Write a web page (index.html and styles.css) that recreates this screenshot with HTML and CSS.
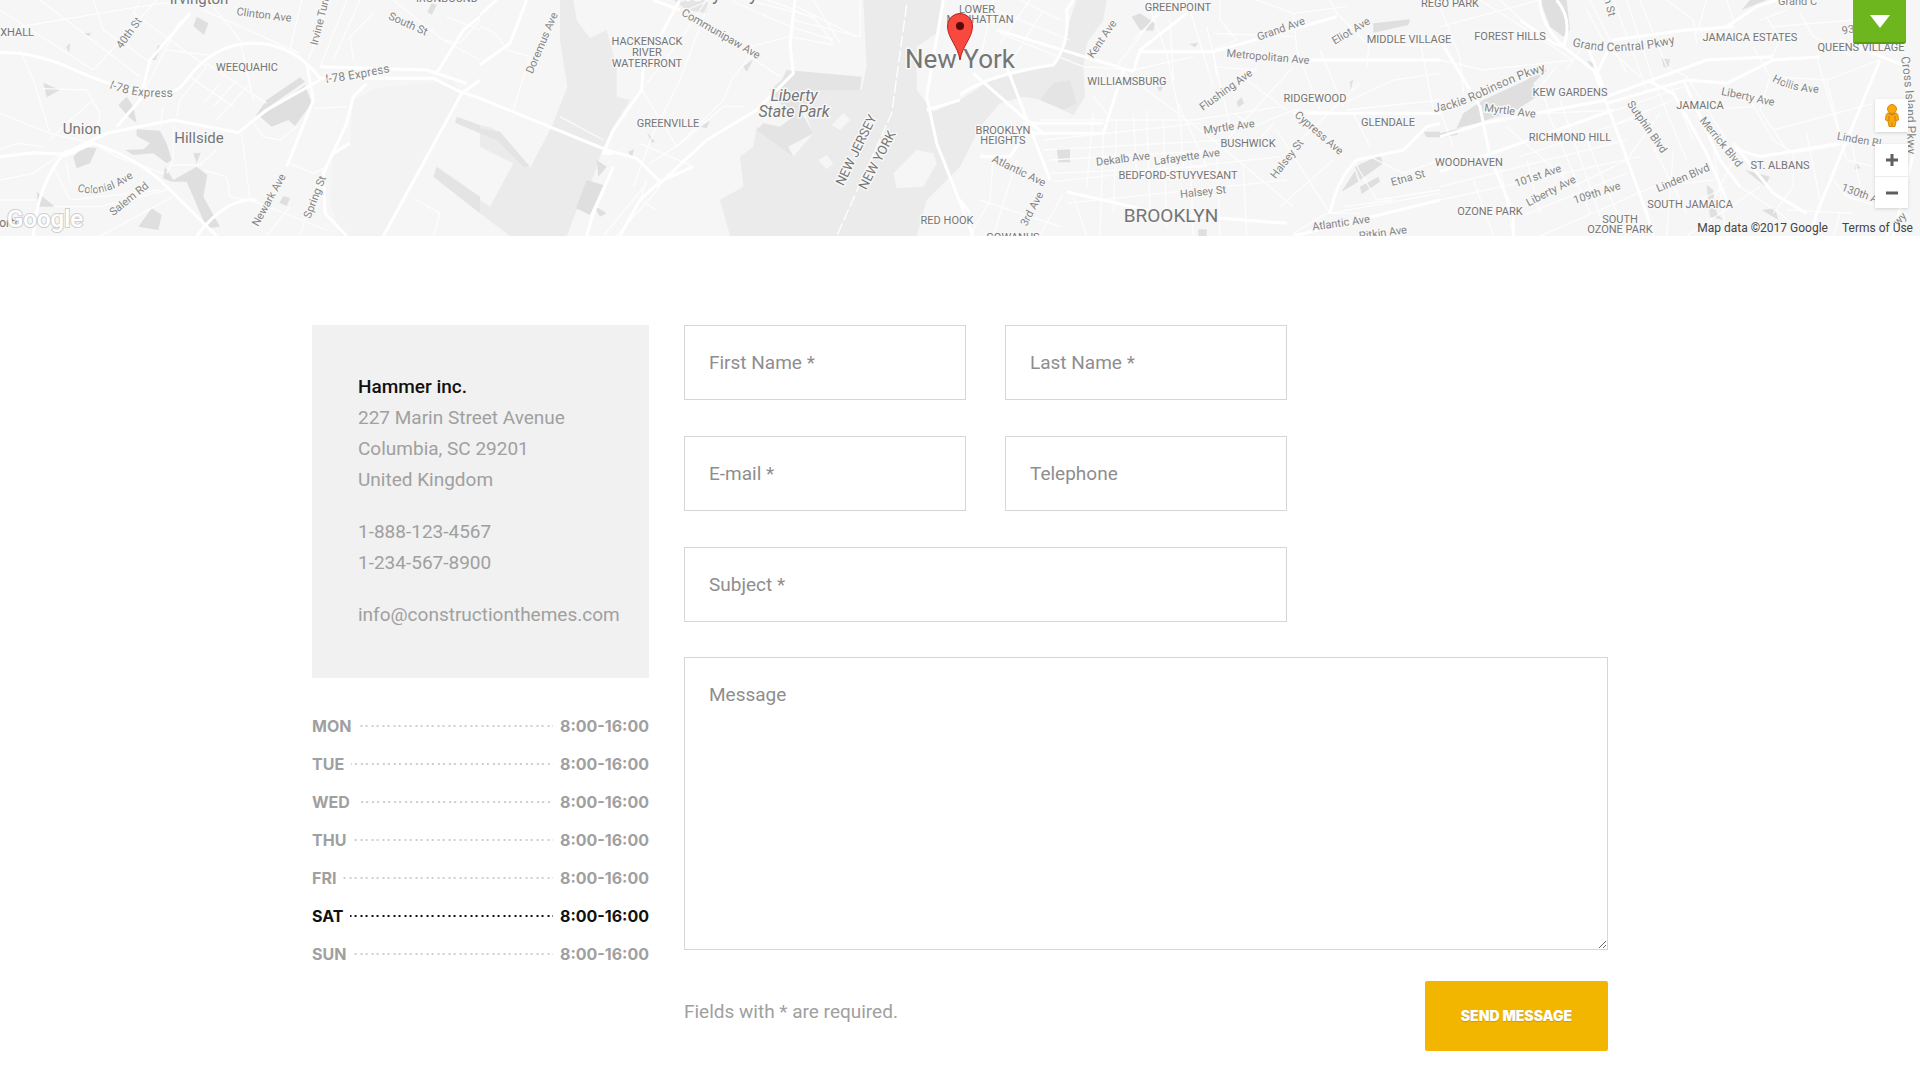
FILE: index.html
```html
<!DOCTYPE html>
<html lang="en">
<head>
<meta charset="utf-8">
<meta name="viewport" content="width=device-width, initial-scale=1">
<title>Contact – Hammer inc.</title>
<link rel="stylesheet" href="styles.css">
</head>
<body>
<header class="map">
  <svg class="map-canvas" viewBox="0 0 1920 236" preserveAspectRatio="xMidYMid slice" role="img" aria-label="Map of New York">
    <!-- Terrain is drawn on a grid three times finer than the labels -->
    <svg width="1920" height="236" viewBox="0 0 5760 708">
      <rect class="land" width="5760" height="708"/>
      <g>
        <path class="field" d="M1060 300L1130 265 1360 240 1385 290 1150 708H1020L990 600 1000 470 1050 430z"/>
        <path class="water-dark" d="M1310 500L1440 590V640L1300 530zM1370 350L1440 375V400L1365 368z"/>
        <path class="park" d="M590 50L625 70 612 105 580 78zM455 180L475 135 484 140 466 180zM765 350L800 300 900 232 915 245 800 325zM780 350L915 255 935 310 885 378 865 360 815 380zM130 248L180 270 140 292zM355 315L380 290 400 320 410 370 385 350zM410 388L480 392 500 430 515 480 500 490 460 460 400 465 375 450 430 448 450 430 410 408zM220 470L250 440 290 445 270 490 230 505zM110 575L165 620 115 620zM495 500L520 540 590 500 622 525 610 590 660 680 620 685 575 580 560 545 515 545 490 535zM415 680L455 625 485 645 475 690zM850 588L870 595 860 618 838 608zM1295 10L1310 15 1295 45 1282 35zM580 460L602 458 590 490zM250 100L275 98 265 110zM198 140L210 130 208 158z"/>
        <path class="minor" d="M0 30L280 210M120 0L420 230M280 0L310 90 455 190M420 0L400 40 620 200M640 20L720 120 760 300M610 30L900 160M280 210L470 0M430 280L540 60M620 200L540 300 530 350M570 230L700 320M620 190L800 310M660 250L610 310M710 240L640 320M750 250L650 360M500 150L620 165M0 340L150 400 280 430M0 450L50 430 130 440M60 150L100 240 150 400M130 266L260 270 300 340 290 400M280 300L200 370 150 420M490 320L480 380M0 540L100 520 200 450M160 500L190 560 210 600 480 570M200 490L210 550M280 430L350 470 490 520M510 495L610 495M590 500L650 450M520 380V480L500 520M610 510L680 530 690 590 740 600M725 400L750 600M870 150L905 0M870 490L940 520 980 500M940 325L1040 320M760 370L790 410 840 420 890 380M160 620L300 620 500 570M0 600L110 600M300 708L520 590M750 600L980 690M870 620L800 708M920 640L900 708M1060 180L1050 110 1120 40M1180 0L1330 120 1440 180M1340 50L1440 90M1250 600L1320 640 1300 708M925 180L990 0M1330 120L1380 130 1440 60M1040 0L960 200M1080 0L1000 180M0 90L420 20 560 0"/>
        <path class="major" d="M0 158Q100 155 220 208T430 280 560 240Q640 130 760 130T960 235H1300L1380 275 1440 295M0 470L100 458 190 462 320 400 520 360 715 398 800 330 960 240M190 462Q110 560 100 708M190 470L280 430Q400 470 480 540L650 708M590 708Q680 590 770 600M860 500L940 300 920 190M1440 240L1385 280 1150 708M960 200L1280 210 1400 250M1060 290L1040 370 970 520 975 640 1040 708M1310 220L1390 90 1440 50M350 380L420 300 450 180 570 40M1050 430L1000 460M1100 250L1060 290"/>
      </g>
      <g transform="translate(1440 0)">
        <path class="water" d="M240 0V120L262 260 215 380 150 505 40 385 0 375V440L100 490 30 620 0 600V640L90 708H260L290 630 340 530 370 440 400 380 450 300 410 290V200L380 90 330 115 290 60 280 0z"/>
        <path class="water" d="M1150 0L1160 200 1145 270 1020 260 960 300 1000 400 940 470 830 380 820 440 780 470 790 560 720 600 750 708H1310L1340 600 1440 500 1500 380 1560 310 1630 290 1690 300 1780 345 1815 290 1810 200 1820 130 1870 60 1880 0H1790L1770 60 1730 190 1540 235 1440 300 1360 335 1310 270V140L1370 100 1385 0z"/>
        <path class="water-dark" d="M905 240L920 210 1145 230 1140 270 1020 270 960 330 1000 400 925 440 940 470 830 390 850 370 900 380 940 350 900 310 870 270zM0 385L60 395 150 500 130 500 50 420 0 400zM580 0H690L680 40 620 30z"/>
        <path class="land" d="M1240 520L1310 450 1360 460 1370 490 1330 560 1250 565zM1055 375L1090 340 1110 360 1080 390zM1015 480L1040 465 1060 490 1040 508zM680 500L780 440 780 560 740 550z"/>
        <path class="park" d="M320 540L370 555 330 645 288 625zM340 615L380 640 360 650zM350 480L380 500 355 530zM790 200L820 178 800 215zM500 395L525 425 515 428zM660 380L690 362 680 385zM445 455L462 448 455 475z"/>
        <path class="minor" d="M0 80Q50 90 80 150L150 170 100 330M620 30L690 0 600 240 520 400 460 560M500 250L600 120 680 0M480 260L590 440M590 440L730 320 790 320M510 490L600 430 730 300 760 230 810 170 900 230M750 0L930 80 1060 120M800 0L1000 50 1060 130M860 0L920 20 1010 60M1140 0V110L940 60M810 140L930 110 1060 135M950 20L1130 110M240 350L370 420M330 650L390 530M370 708L500 550M410 708L540 560M500 540L480 600 530 630M1000 0L1080 130M480 430L640 500"/>
        <path class="major" d="M0 45L50 0M140 0L90 130 0 195M0 295L380 450 470 475 540 545M600 0L490 200 485 270 400 390 370 460 400 460M540 545L640 500M530 560L680 420 830 330 940 220 930 130 945 0M520 0L600 30M540 545L480 600 420 708M320 708L340 640 400 500M1390 0L1340 290 1370 430 1480 708M1340 330L1440 300"/>
        <path class="border" d="M1280 15L1235 340 1070 708"/>
      </g>
      <g transform="translate(2880 0)">
        <path class="water" d="M0 300L60 380 0 500z"/>
        <path class="water-dark" d="M280 250L330 240 350 310 310 330 240 300z"/>
        <path class="park" d="M515 50L540 40 585 70 580 92 540 90zM1240 70L1350 58 1345 75 1240 98zM1185 500L1260 465 1270 490 1200 540zM1145 575L1185 512 1195 545zM1200 560L1255 530 1260 545 1205 582zM290 445H330V487H295zM715 688H740V708H715zM830 305L845 292 852 310 835 322zM590 260H610L600 277zM688 132L715 128 705 142zM1170 245L1180 238 1172 270zM1390 395H1440V412H1400z"/>
        <path class="minor" d="M30 0L330 120M100 0L60 180M180 0L300 60M210 0L120 130M250 30L150 190M120 100L370 200M370 200L520 210 700 170M560 0L620 160 660 350 670 500M600 30L470 200M690 30L760 260M740 80L820 420M630 60L640 240M520 120L600 40M760 100L1000 110M890 0L1000 40 1160 20M1110 0L1130 40 1220 130 1440 140M1000 40L1010 150 1080 330M1080 150L1150 320M890 200L860 240 980 330M1000 200L800 420M940 370L880 440M1160 330L1440 300M1230 100L1220 200M1150 310L1300 240 1440 220M1380 120L1420 330M60 460L250 540M240 360L700 360M250 420L720 370M250 450L800 420M270 480L780 450M270 520L740 500M280 545L960 470M320 610L980 540M400 340L380 560M430 400L420 708M470 360L460 640M520 340L530 540M560 330L570 640M610 360L620 680M650 300L740 500M850 500L860 708M690 460L700 708M770 440L780 708M480 210L760 420 1000 620M700 360L960 320M950 390L1110 640M1120 480L960 620M1180 480L1250 600 1440 570M1110 640L1440 580M1150 620L1300 600M1000 700L1100 640 1200 640M1230 470L1330 520 1440 480M1180 340L1230 440M100 470L90 600 30 708M170 480L100 708M60 600L300 680M310 580L240 708M340 590L380 708M820 340L880 380 1000 330 1150 340M1010 430L1200 250M760 200L890 210M400 290L450 350"/>
        <path class="minor" d="M780 0V60L830 120 760 150 770 230"/>
        <path class="major" d="M0 285Q80 225 280 195 330 130 320 30L340 0M40 220L200 360 250 400M140 200L270 540M110 90L520 215M520 215L540 150 680 40M490 210L430 400H200M190 370H430M540 155L760 155 1130 50M1030 180L1440 180M320 575L600 640 980 670M1000 708L1440 600M1110 640Q1130 540 1190 480L1330 450 1400 380 1440 370M0 600L30 640M1000 340L1440 340M60 470H150L210 380"/>
      </g>
      <g transform="translate(4320 0)">
        <path class="park" d="M300 0H380L390 90 370 110 330 80zM130 300L260 240 310 200 320 212 280 250 290 290 230 330 110 370 50 385 70 340zM0 400L60 385 50 405 0 412zM665 175L690 178 685 205 670 200zM440 180L460 190 460 212zM915 510L990 530 975 558zM905 30L930 0H980zM800 555L820 570 830 640 850 660 810 650zM965 630L1005 625 1015 660zM1245 485L1262 505 1245 508z"/>
        <path class="minor" d="M0 20L60 170 70 280M120 0L400 180M0 80L300 0M0 180L130 210 400 180M180 0L320 130M440 30L500 140 600 230M520 0L620 270M560 0L640 240M450 0L560 220M600 0L680 200 740 230M680 0L760 60 770 130M800 0L770 100M860 0L880 60M980 50L1020 120 990 180M1080 40L1120 110 1240 170M1000 80L1240 60M1040 30L960 60M940 140L990 230 960 330 1040 450M740 230L860 420M640 240L740 480M690 250L760 420M380 210L440 120M350 200L300 260 330 340M310 340L530 330 730 260M530 370L700 300M200 380L380 540M320 330L450 640M360 300L500 708M240 470L600 350M0 560L560 420M0 600L600 470M240 650L560 520M300 708L640 560 820 540M100 540L160 708M180 500L220 708M260 480L300 640M440 420L560 708M640 440L740 640M700 450L680 708M820 440L860 708M900 440L820 600M930 300L1000 420 1060 460 1060 560 1000 640M1000 390L1300 310M1060 460L1230 430M1000 230L1160 240 1320 180M1160 240L1200 400M1130 170L1220 480 1300 500M1230 400L1260 560M1180 540L1220 590 1320 620M1040 630L1240 640M900 560L1020 640 1100 708M960 560L740 708M1200 640L1180 708M860 560L740 620M780 330L940 320M660 340L560 480 400 560M0 330L40 440M1100 400L1140 600"/>
        <path class="major" d="M300 0Q300 70 370 140 400 60 350 0M370 140L340 130 240 60M370 140L460 210 500 310 620 640 640 708M0 410L130 370 500 300M130 370L120 320 0 120M440 130L500 290 800 180 1000 170M780 90L860 80 950 20 1010 0M500 310L740 240 860 250 1000 180 1140 170M0 515L520 330M470 220L520 120 740 90 880 80M620 240L700 280 800 460 860 600M880 430L1000 580 1100 640M860 440L960 470 1200 430M1320 180L1130 640 1110 708M1200 120L1400 200M1395 170L1420 460 1360 708M130 370L150 470 220 640V708M730 240L840 480 900 560M1380 640L1340 708"/>
      </g>
    </svg>

    <defs>
      <path id="i78-west" d="M109 88Q138 100 180 96"/>
      <path id="i78-east" d="M326 83Q352 80 395 71"/>
      <path id="colonial" d="M77 191Q104 200 138 174"/>
      <path id="grand-central" d="M1572 46Q1622 58 1680 42"/>
      <path id="jackie" d="M1434 112C1470 108 1490 88 1548 70"/>
      <path id="hollis" d="M1772 81Q1792 93 1828 93"/>
      <path id="cross-island" d="M1901 57Q1909 105 1907 165"/>
    </defs>

    <g class="label road">
      <text transform="translate(129 33) rotate(-54)">40th St</text>
      <text transform="translate(264 15) rotate(7)">Clinton Ave</text>
      <text class="start" transform="translate(314 45) rotate(-76)">Irvine Turner Blvd</text>
      <text transform="translate(408 24) rotate(24)">South St</text>
      <text transform="translate(129 199) rotate(-39)">Salem Rd</text>
      <text transform="translate(269 200) rotate(-61)">Newark Ave</text>
      <text transform="translate(315 197) rotate(-69)">Spring St</text>
      <text transform="translate(542 43) rotate(-67)">Doremus Ave</text>
      <text transform="translate(721 34) rotate(30)">Communipaw Ave</text>
      <text transform="translate(1102 39) rotate(-56)">Kent Ave</text>
      <text transform="translate(1281 29) rotate(-20)">Grand Ave</text>
      <text transform="translate(1268 57) rotate(5)">Metropolitan Ave</text>
      <text transform="translate(1351 31) rotate(-31)">Eliot Ave</text>
      <text transform="translate(1226 90) rotate(-36)">Flushing Ave</text>
      <text transform="translate(1229 127) rotate(-8)">Myrtle Ave</text>
      <text transform="translate(1319 133) rotate(41)">Cypress Ave</text>
      <text transform="translate(1123 159) rotate(-7)">Dekalb Ave</text>
      <text transform="translate(1187 157) rotate(-8)">Lafayette Ave</text>
      <text transform="translate(1287 159) rotate(-52)">Halsey St</text>
      <text transform="translate(1203 192) rotate(-6)">Halsey St</text>
      <text transform="translate(1019 171) rotate(26)">Atlantic Ave</text>
      <text transform="translate(1032 209) rotate(-62)">3rd Ave</text>
      <text transform="translate(1408 178) rotate(-15)">Etna St</text>
      <text transform="translate(1341 223) rotate(-8)">Atlantic Ave</text>
      <text transform="translate(1383 233) rotate(-8)">Pitkin Ave</text>
      <text class="end" transform="translate(1612 16) rotate(75)">Main St</text>
      <text class="start" transform="translate(1778 1)">Grand C</text>
      <text class="start" transform="translate(1842 31) rotate(-10)">93rd</text>
      <text transform="translate(1510 111) rotate(7)">Myrtle Ave</text>
      <text transform="translate(1748 97) rotate(12)">Liberty Ave</text>
      <text transform="translate(1647 127) rotate(55)">Sutphin Blvd</text>
      <text transform="translate(1721 142) rotate(51)">Merrick Blvd</text>
      <text class="start" transform="translate(1837 136) rotate(10)">Linden Bl</text>
      <text transform="translate(1538 176) rotate(-19)">101st Ave</text>
      <text transform="translate(1551 191) rotate(-27)">Liberty Ave</text>
      <text transform="translate(1597 193) rotate(-18)">109th Ave</text>
      <text transform="translate(1683 178) rotate(-23)">Linden Blvd</text>
      <text class="start" transform="translate(1842 187) rotate(20)">130th A</text>
      <text transform="translate(1900 219) rotate(-45)">wy</text>
    </g>
    <g class="label curved">
      <text class="highway"><textPath href="#i78-west">I-78 Express</textPath></text>
      <text class="highway"><textPath href="#i78-east">I-78 Express</textPath></text>
      <text><textPath href="#colonial">Colonial Ave</textPath></text>
      <text class="highway"><textPath href="#grand-central">Grand Central Pkwy</textPath></text>
      <text class="highway"><textPath href="#jackie">Jackie Robinson Pkwy</textPath></text>
      <text><textPath href="#hollis">Hollis Ave</textPath></text>
      <text class="highway"><textPath href="#cross-island">Cross Island Pkwy</textPath></text>
    </g>
    <g class="label district">
      <text class="end" x="34" y="32">VAUXHALL</text>
      <text x="447" y="-2">IRONBOUND</text>
      <text x="247" y="67">WEEQUAHIC</text>
      <text x="647" y="41">HACKENSACK</text>
      <text x="647" y="52">RIVER</text>
      <text x="647" y="63">WATERFRONT</text>
      <text x="668" y="123">GREENVILLE</text>
      <text x="947" y="220">RED HOOK</text>
      <text x="977" y="9">LOWER</text>
      <text x="980" y="19">MANHATTAN</text>
      <text x="1178" y="7">GREENPOINT</text>
      <text x="1409" y="39">MIDDLE VILLAGE</text>
      <text x="1127" y="81">WILLIAMSBURG</text>
      <text x="1315" y="98">RIDGEWOOD</text>
      <text x="1248" y="143">BUSHWICK</text>
      <text x="1388" y="122">GLENDALE</text>
      <text x="1003" y="130">BROOKLYN</text>
      <text x="1003" y="140">HEIGHTS</text>
      <text x="1178" y="175">BEDFORD-STUYVESANT</text>
      <text x="1013" y="237">GOWANUS</text>
      <text x="1450" y="3">REGO PARK</text>
      <text x="1510" y="36">FOREST HILLS</text>
      <text x="1750" y="37">JAMAICA ESTATES</text>
      <text x="1861" y="47">QUEENS VILLAGE</text>
      <text x="1570" y="92">KEW GARDENS</text>
      <text x="1700" y="105">JAMAICA</text>
      <text x="1570" y="137">RICHMOND HILL</text>
      <text x="1469" y="162">WOODHAVEN</text>
      <text x="1780" y="165">ST. ALBANS</text>
      <text x="1690" y="204">SOUTH JAMAICA</text>
      <text x="1490" y="211">OZONE PARK</text>
      <text x="1620" y="219">SOUTH</text>
      <text x="1620" y="229">OZONE PARK</text>
    </g>
    <g class="label town">
      <text x="199" y="-1">Irvington</text>
      <text x="82" y="129">Union</text>
      <text x="199" y="138">Hillside</text>
      <text class="suburb end" x="21" y="223">North</text>
      <text class="place" x="794" y="95">Liberty</text>
      <text class="place" x="794" y="111">State Park</text>
      <text class="state" transform="translate(856 150) rotate(-64)">NEW JERSEY</text>
      <text class="state" transform="translate(877 160) rotate(-62)">NEW YORK</text>
      <text class="borough end" x="758" y="-7">Jersey City</text>
      <text class="borough" x="1171" y="215">BROOKLYN</text>
      <text class="city" x="960" y="59">New York</text>
    </g>
    <text class="map-logo" x="7" y="227">Google</text>

    <g class="pin">
      <path class="pin-body" d="M960 60C958 46 947.500 38 947.500 26A12.500 12.500 0 0 1 972.500 26C972.500 38 962 46 960 60z"/>
      <circle class="pin-hole" cx="960" cy="26" r="4"/>
    </g>
  </svg>

  <button class="panel-toggle" type="button" aria-label="Open panel">
    <svg width="20" height="13" viewBox="0 0 20 13" aria-hidden="true"><path d="M0 0H20L10 13z"/></svg>
  </button>
  <div class="map-controls">
    <button class="map-button" type="button" aria-label="Street View">
      <svg width="14" height="24" viewBox="0 0 14 24" aria-hidden="true">
        <path class="pegman" d="M4 9C2 9 1 10 1 12L.5 16 3 17 4 22.500H10L11 17 13.500 16 13 12C13 10 12 9 10 9z"/>
        <circle class="pegman" cx="7" cy="5" r="4.500"/>
        <path class="pegman-shade" d="M3.500 9.500Q7 12 10.500 9.500M4 12V17M10 12V17M7 18V22"/>
      </svg>
    </button>
    <div class="zoom">
      <button class="map-button" type="button" aria-label="Zoom in">
        <svg width="12" height="12" viewBox="0 0 12 12" aria-hidden="true"><path class="glyph" d="M0 6H12M6 0V12"/></svg>
      </button>
      <button class="map-button" type="button" aria-label="Zoom out">
        <svg width="12" height="12" viewBox="0 0 12 12" aria-hidden="true"><path class="glyph" d="M0 6H12"/></svg>
      </button>
    </div>
  </div>
  <div class="map-credit"><span>Map data ©2017 Google</span><a href="#terms">Terms of Use</a></div>
</header>

<main class="contact">
  <aside class="sidebar">
    <address class="card">
      <p><strong>Hammer inc.</strong><br>227 Marin Street Avenue<br>Columbia, SC 29201<br>United Kingdom</p>
      <p>1-888-123-4567<br>1-234-567-8900</p>
      <p><a href="mailto:info@constructionthemes.com">info@constructionthemes.com</a></p>
    </address>
    <ul class="hours">
      <li><span>MON</span><i class="dots"></i><span>8:00-16:00</span></li>
      <li><span>TUE</span><i class="dots"></i><span>8:00-16:00</span></li>
      <li><span>WED</span><i class="dots"></i><span>8:00-16:00</span></li>
      <li><span>THU</span><i class="dots"></i><span>8:00-16:00</span></li>
      <li><span>FRI</span><i class="dots"></i><span>8:00-16:00</span></li>
      <li class="today"><span>SAT</span><i class="dots"></i><span>8:00-16:00</span></li>
      <li><span>SUN</span><i class="dots"></i><span>8:00-16:00</span></li>
    </ul>
  </aside>

  <form class="form">
    <div class="fields">
      <input class="field-box" type="text" placeholder="First Name *" aria-label="First Name">
      <input class="field-box" type="text" placeholder="Last Name *" aria-label="Last Name">
      <input class="field-box" type="email" placeholder="E-mail *" aria-label="E-mail">
      <input class="field-box" type="tel" placeholder="Telephone" aria-label="Telephone">
      <input class="field-box wide" type="text" placeholder="Subject *" aria-label="Subject">
    </div>
    <textarea class="field-box message" placeholder="Message" aria-label="Message"></textarea>
    <div class="form-footer">
      <p>Fields with * are required.</p>
      <button class="send" type="submit">SEND MESSAGE</button>
    </div>
  </form>
</main>
</body>
</html>
```
FILE: styles.css
```css
* { box-sizing: border-box; }

body {
  margin: 0;
  background: #fff;
  color: #a0a0a0;
  font: 19px/31px Roboto, "Liberation Sans", sans-serif;
}

p, ul { margin: 0; padding: 0; }
a { color: inherit; text-decoration: none; }
button { border: 0; padding: 0; font: inherit; cursor: pointer; }

/* Map */
.map { position: relative; overflow: hidden; }
.map-canvas { display: block; width: 100%; height: 236px; }

.land { fill: #f6f6f6; }
.field { fill: #f3f3f3; }
.water { fill: #ebebeb; }
.water-dark { fill: #e4e4e4; }
.park { fill: #dfdfdf; }
.minor, .major { fill: none; stroke: #fff; stroke-linejoin: round; }
.minor { stroke-width: 4; opacity: .8; }
.major { stroke-width: 9; }
.border { fill: none; stroke: #fff; stroke-width: 4; stroke-dasharray: 36 10; }

.label text {
  fill: #757575;
  stroke: #f8f8f8;
  stroke-width: 3px;
  stroke-linejoin: round;
  paint-order: stroke;
  text-anchor: middle;
  dominant-baseline: central;
  font-size: 11px;
}
.label.curved text { text-anchor: start; dominant-baseline: auto; }
.label.road text, .label.curved text { fill: #858585; }
.label.town text { font-size: 15px; }
.label .highway { font-size: 12px; }
.label text.start { text-anchor: start; }
.label text.end { text-anchor: end; }
.label.town .suburb { font-size: 12px; }
.label.town .place { font-size: 16px; font-style: italic; }
.label.town .state { font-size: 13px; }
.label.town .borough { font-size: 19px; }
.label.town .city { font-size: 26px; }

.map-logo {
  fill: #fff;
  stroke: #cfcfcf;
  stroke-width: 2px;
  paint-order: stroke;
  font-size: 24px;
  font-weight: 500;
}

.pin-body { fill: #f9483f; stroke: #b3201b; stroke-width: 1; }
.pin-hole { fill: #5a0a08; }

.panel-toggle {
  position: absolute;
  top: 0;
  right: 14px;
  display: flex;
  align-items: center;
  justify-content: center;
  width: 53px;
  height: 44px;
  border-bottom: 2px solid #589c12;
  border-radius: 0 0 3px 3px;
  background: #6eb61e;
  fill: #fff;
}

.map-controls {
  position: absolute;
  top: 99px;
  right: 12px;
  display: grid;
  gap: 12px;
}
.map-button {
  display: flex;
  align-items: center;
  justify-content: center;
  width: 33px;
  height: 33px;
  background: #fff;
  box-shadow: 0 1px 3px rgba(0, 0, 0, .15);
}
.zoom { display: grid; box-shadow: 0 1px 3px rgba(0, 0, 0, .15); background: #fff; }
.zoom .map-button { height: 32px; box-shadow: none; }
.zoom .map-button + .map-button { border-top: 1px solid #ececec; }
.glyph { fill: none; stroke: #5f5f5f; stroke-width: 3; }
.pegman { fill: #f9a90c; stroke: #d98a10; }
.pegman-shade { fill: none; stroke: #c97c10; }

.map-credit {
  position: absolute;
  right: 0;
  bottom: 0;
  display: flex;
  gap: 14px;
  padding: 0 7px;
  color: #444;
  font-size: 12px;
  line-height: 16px;
}

/* Contact section */
.contact {
  display: grid;
  grid-template-columns: 337fr 924fr;
  gap: 35px;
  width: 68%;
  max-width: 1296px;
  margin: 0 auto;
  padding: 89px 0 29px;
}

.card {
  display: grid;
  gap: 21px;
  padding: 46px 16px 48px 46px;
  background: #f1f1f1;
  font-style: normal;
}
.card strong { color: #111; font-weight: 500; }

.hours {
  margin-top: 29px;
  list-style: none;
  font: 700 16px/38px Inter, "Liberation Sans", sans-serif;
}
.hours li { display: flex; align-items: center; gap: 7px; }
.dots {
  flex: 1;
  height: 2px;
  background:
    radial-gradient(circle at 1px 1px, currentColor 1px, transparent 1px) right / 11px 2px,
    radial-gradient(circle at 7px 1px, currentColor 1px, transparent 1px) right / 11px 2px;
  opacity: .5;
}
.today { color: #111; }
.today .dots { opacity: 1; }

/* Form */
.form { display: grid; gap: 35px; align-content: start; }
.fields {
  display: grid;
  grid-template-columns: 1fr 1fr;
  gap: 36px 39px;
  margin-right: 35%;
  padding-right: 0;
  min-width: 480px;
}
@media (min-width: 1600px) {
  .fields { margin-right: 321px; }
}
.wide { grid-column: 1 / -1; }
.field-box {
  display: block;
  width: 100%;
  min-width: 0;
  height: 75px;
  padding: 0 24px;
  border: 1px solid #d6d6d6;
  border-radius: 0;
  background: #fff;
  color: #333;
  font: inherit;
}
.field-box::placeholder { color: #8e8e8e; opacity: 1; }
.message { height: 293px; padding-top: 21px; resize: vertical; }

.form-footer {
  display: flex;
  justify-content: space-between;
  align-items: flex-start;
  margin-top: -4px;
}
.form-footer p { padding-top: 15px; }
.send {
  width: 183px;
  height: 70px;
  border-radius: 2px;
  background: #f2b600;
  color: #fff;
  font: 900 14px/20px Inter, "Liberation Sans", sans-serif;
  text-shadow: 0 1px 1px rgba(0, 0, 0, .15);
}
```
